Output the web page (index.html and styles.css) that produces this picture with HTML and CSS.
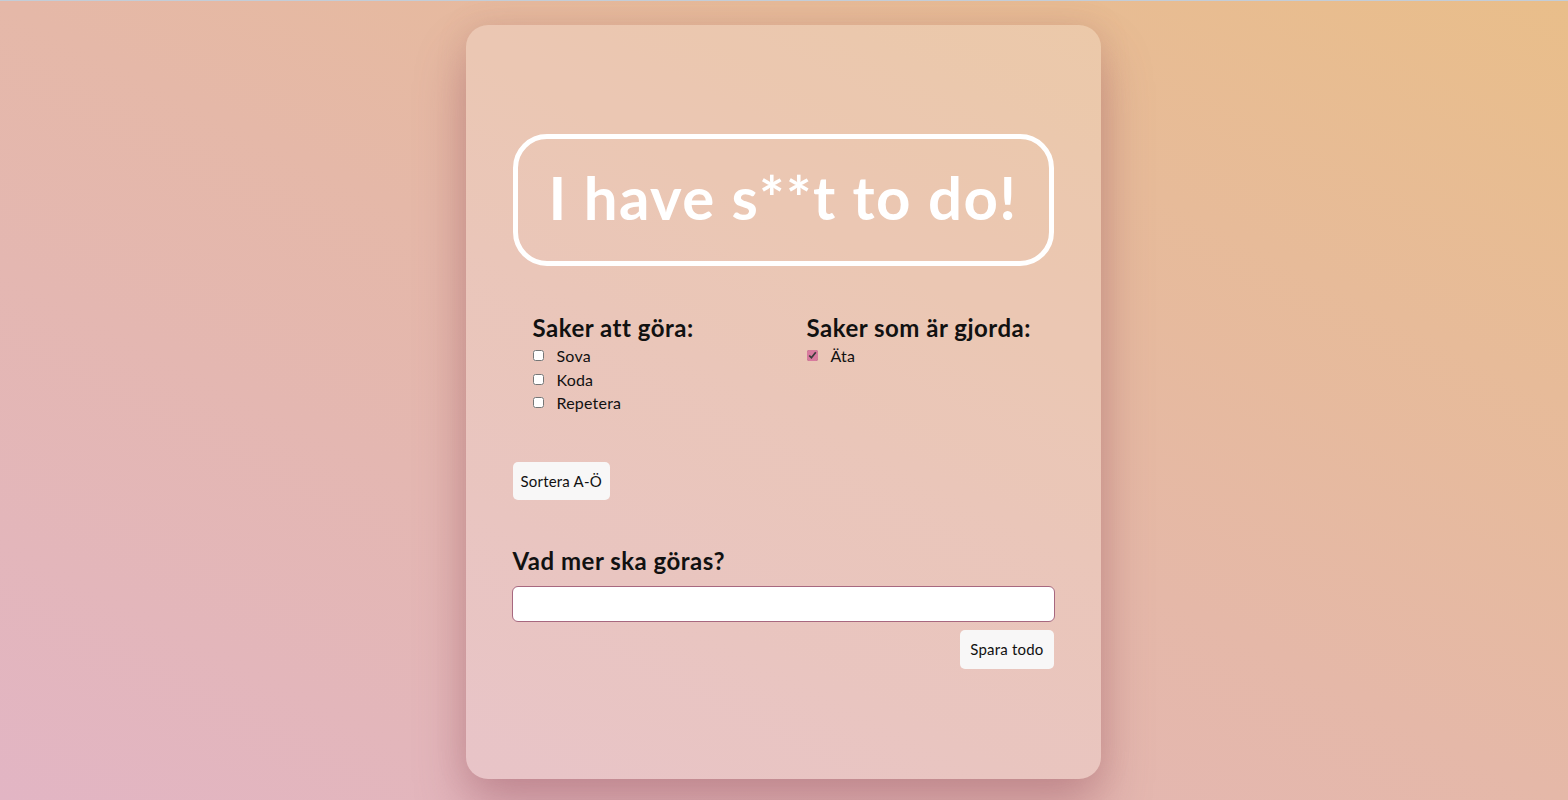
FILE: index.html
```html
<!DOCTYPE html>
<html lang="sv">
<head>
<meta charset="utf-8">
<title>I have s**t to do!</title>
<link rel="stylesheet" href="styles.css">
</head>
<body>
<main class="card">
  <h1 class="title">I have s**t to do!</h1>
  <section class="lists">
    <div class="list">
      <h2 class="list-heading">Saker att göra:</h2>
      <label class="item"><input type="checkbox"><span>Sova</span></label>
      <label class="item"><input type="checkbox"><span>Koda</span></label>
      <label class="item"><input type="checkbox"><span>Repetera</span></label>
    </div>
    <div class="list">
      <h2 class="list-heading">Saker som är gjorda:</h2>
      <label class="item"><input type="checkbox" checked><span>Äta</span></label>
    </div>
  </section>
  <button class="btn sort-btn">Sortera A-Ö</button>
  <form class="add-form" onsubmit="return false">
    <h2 class="form-heading">Vad mer ska göras?</h2>
    <input class="todo-input" type="text">
    <div class="form-actions">
      <button class="btn save-btn" type="button">Spara todo</button>
    </div>
  </form>
</main>
</body>
</html>
```
FILE: styles.css
```css
html, body {
  margin: 0;
  height: 100%;
}
body {
  font-family: "Lato", "Noto Sans", sans-serif;
  background: linear-gradient(to top right, #e2b5c4 0%, #e5b8a8 50%, #e9be8a 100%);
  border-top: 1px solid #c3cdd8;
  box-sizing: border-box;
  display: flex;
  justify-content: center;
  align-items: flex-start;
  overflow: hidden;
}
.card {
  margin-top: 24px;
  margin-right: 2px;
  width: 635px;
  height: 754px;
  box-sizing: border-box;
  padding: 109px 47px 0;
  border-radius: 22px;
  background: rgba(255, 255, 255, 0.2);
  box-shadow: 0 30px 50px rgba(150, 80, 100, 0.4), 0 0 30px rgba(170, 110, 100, 0.2);
  display: flex;
  flex-direction: column;
  align-items: flex-start;
}
.title {
  margin: 0;
  width: 100%;
  box-sizing: border-box;
  height: 132px;
  border: 5px solid #fff;
  border-radius: 34px;
  color: #fff;
  font-size: 60px;
  font-weight: 700;
  display: flex;
  align-items: center;
  justify-content: center;
  letter-spacing: 1.4px;
  padding-bottom: 6px;
}
.lists {
  margin-top: 47px;
  padding-left: 20px;
  width: 100%;
  box-sizing: border-box;
  display: grid;
  grid-template-columns: 274px 1fr;
}
.list {
  display: flex;
  flex-direction: column;
}
.list-heading {
  margin: 0 0 1px;
  font-size: 24px;
  font-weight: 700;
  color: #111;
  line-height: 30px;
  letter-spacing: 0.5px;
}
.item {
  display: flex;
  align-items: center;
  height: 23.5px;
  font-size: 16px;
  color: #111;
  letter-spacing: 0.2px;
}
.item input {
  margin: 0 13px 0 0;
  width: 11px;
  height: 11px;
  accent-color: #d87a9e;
}
.btn {
  font-family: inherit;
  font-size: 15px;
  color: #111;
  background: #f8f7f7;
  border: none;
  border-radius: 5px;
  padding: 0 8px;
  height: 38px;
  letter-spacing: 0.2px;
}
.sort-btn {
  margin-top: 47px;
}
.add-form {
  margin-top: 46px;
  width: 100%;
  display: flex;
  flex-direction: column;
}
.form-heading {
  margin: 0 0 10px;
  font-size: 24px;
  font-weight: 700;
  color: #111;
  line-height: 30px;
  letter-spacing: 0.5px;
}
.todo-input {
  height: 36px;
  box-sizing: border-box;
  border: 1px solid #a7687f;
  border-radius: 6px;
  background: #fff;
  margin: 0 -1px;
}
.form-actions {
  display: flex;
  justify-content: flex-end;
  margin-top: 8px;
}
.save-btn {
  height: 39px;
  padding: 0 10px;
}
```
